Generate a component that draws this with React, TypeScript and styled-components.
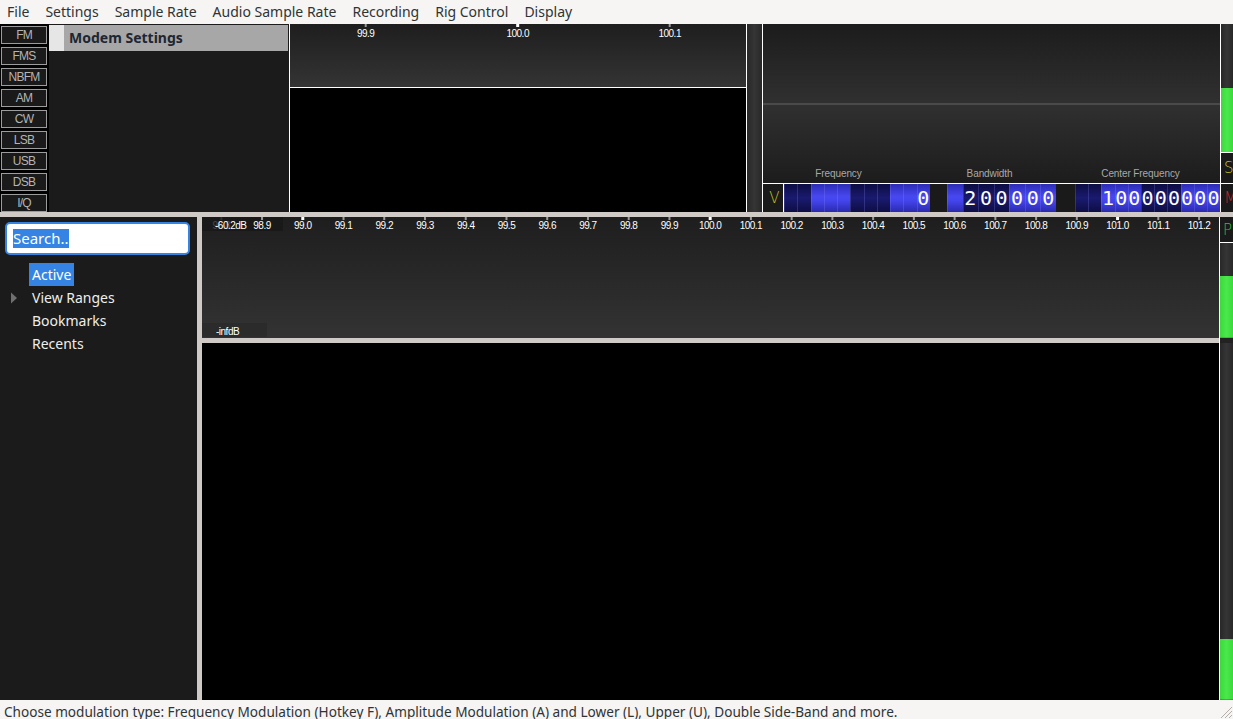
import React from "react";
import styled, { createGlobalStyle } from "styled-components";

const UI_FONT = `"Noto Sans", "Open Sans", sans-serif`;
const SCOPE_FONT = `"Liberation Sans", Arial, sans-serif`;
const MONO_FONT = `"DejaVu Sans Mono", "Liberation Mono", monospace`;

const SPLIT = "#cfcac5";
const PANEL = "#1b1b1b";

const GlobalStyle = createGlobalStyle`
  html, body {
    margin: 0;
    padding: 0;
    overflow: hidden;
    background: #f6f5f4;
  }
  * {
    box-sizing: border-box;
  }
`;

const MENU = ["File", "Settings", "Sample Rate", "Audio Sample Rate", "Recording", "Rig Control", "Display"];
const MODES = ["FM", "FMS", "NBFM", "AM", "CW", "LSB", "USB", "DSB", "I/Q"];
const TREE = [
  { label: "Active", selected: true, expander: false },
  { label: "View Ranges", selected: false, expander: true },
  { label: "Bookmarks", selected: false, expander: false },
  { label: "Recents", selected: false, expander: false },
];

// digit cells are shaded in groups of three counted from the right
const buildCells = (count: number, value: string) => {
  const padded = value.padStart(count, " ");
  return padded.split("").map((ch, i) => ({
    ch: ch === " " ? "" : ch,
    bright: Math.floor((count - 1 - i) / 3) % 2 === 0,
  }));
};

type Tick = { x: number; text: string; major: boolean };

const ScaleTick = ({ tick, baseline }: { tick: Tick; baseline: number }) => (
  <g>
    <rect
      x={tick.x - (tick.major ? 1.5 : 1)}
      y={0}
      width={tick.major ? 3 : 2}
      height={3}
      fill={tick.major ? "#ffffff" : "#9a9a9a"}
    />
    <ScaleText x={tick.x} y={baseline} textAnchor="middle">
      {tick.text}
    </ScaleText>
  </g>
);

const App = () => {
  const bottomLabels: Tick[] = Array.from({ length: 25 }, (_, i) => ({
    x: 19.3 + 40.74 * i,
    text: (98.8 + 0.1 * i).toFixed(1),
    major: i === 2 || i === 12 || i === 22,
  }));
  const topLabels: Tick[] = [
    { x: 75.7, text: "99.9", major: false },
    { x: 227.7, text: "100.0", major: true },
    { x: 379.7, text: "100.1", major: false },
  ];

  return (
    <Shell>
      <GlobalStyle />
      <MenuBar>
        {MENU.map((m) => (
          <MenuItem key={m}>{m}</MenuItem>
        ))}
      </MenuBar>

      <Workspace>
        <TopPane>
          <ModeList>
            {MODES.map((m) => (
              <ModeButton key={m}>{m}</ModeButton>
            ))}
          </ModeList>

          <ModemPanel>
            <ModemHeader>
              <HeaderStrip />
              <HeaderTitle>Modem Settings</HeaderTitle>
            </ModemHeader>
          </ModemPanel>

          <ScopeBox $width={458}>
            <MiniSpectrum>
              <svg width="456" height="63">
                {topLabels.map((l) => (
                  <ScaleTick key={l.text} tick={l} baseline={13} />
                ))}
              </svg>
            </MiniSpectrum>
            <Waterfall />
          </ScopeBox>

          <Meter $width={15} $fill={0} />

          <ScopeBox $width={459}>
            <MainSpectrum>
              <ReadoutLabels>
                <span>Frequency</span>
                <span>Bandwidth</span>
                <span>Center Frequency</span>
              </ReadoutLabels>
            </MainSpectrum>
            <DigitBar>
              <LetterBox $color="#c4c21e" $width={20} $divider>
                V
              </LetterBox>
              <DigitGroup $width={146}>
                {buildCells(11, "0").map((c, i) => (
                  <DigitCell key={i} $bright={c.bright}>
                    {c.ch}
                  </DigitCell>
                ))}
              </DigitGroup>
              <DigitGap $width={17} />
              <DigitGroup $width={109}>
                {buildCells(7, "200000").map((c, i) => (
                  <DigitCell key={i} $bright={c.bright}>
                    {c.ch}
                  </DigitCell>
                ))}
              </DigitGroup>
              <DigitGap $width={19} />
              <DigitGroup $width={145}>
                {buildCells(11, "100000000").map((c, i) => (
                  <DigitCell key={i} $bright={c.bright}>
                    {c.ch}
                  </DigitCell>
                ))}
              </DigitGroup>
            </DigitBar>
          </ScopeBox>

          <SideMeters $width={12}>
            <Meter $fill={50} $grow />
            <LetterBox $color="#c4c21e" $height={31} $topRule>
              S
            </LetterBox>
            <LetterBox $color="#c8262a" $height={29} $topRule>
              M
            </LetterBox>
          </SideMeters>
        </TopPane>

        <BottomPane>
          <Sidebar>
            <SearchField>
              <SearchText>Search..</SearchText>
            </SearchField>
            <Tree>
              {TREE.map((t) => (
                <TreeRow key={t.label}>
                  <Expander>
                    {t.expander && (
                      <svg width="8" height="12" viewBox="0 0 8 12">
                        <path d="M1 0.5 L7 6 L1 11.5 Z" fill="#6f6f6f" />
                      </svg>
                    )}
                  </Expander>
                  <TreeLabel $selected={t.selected}>{t.label}</TreeLabel>
                </TreeRow>
              ))}
            </Tree>
          </Sidebar>

          <ScopeColumn>
            <WideSpectrum>
              <svg width="1017" height="121">
                <ScaleTick tick={bottomLabels[0]} baseline={12} />
                {/* dB readouts sit on a dim plate over the scale */}
                <rect x="0" y="0" width="81" height="14" fill="rgba(24,24,24,0.8)" />
                <rect x="0" y="106" width="65" height="14" fill="rgba(0,0,0,0.12)" />
                {bottomLabels.slice(1).map((l) => (
                  <ScaleTick key={l.text} tick={l} baseline={12} />
                ))}
                <ScaleText x={13} y={12}>
                  -60.2dB
                </ScaleText>
                <ScaleText x={14} y={118}>
                  -infdB
                </ScaleText>
              </svg>
            </WideSpectrum>
            <Waterfall />
          </ScopeColumn>

          <SideMeters $width={14} $rule>
            <LetterBox $color="#2fbf3a" $height={26} $bottomRule>
              P
            </LetterBox>
            <Meter $fill={65} $height={95} />
            <MeterGap />
            <Meter $fill={17} $grow />
          </SideMeters>
        </BottomPane>
      </Workspace>

      <StatusBar>
        <StatusText>
          Choose modulation type: Frequency Modulation (Hotkey F), Amplitude Modulation (A) and Lower (L), Upper (U),
          Double Side-Band and more.
        </StatusText>
        <Grip width="16" height="16" viewBox="0 0 16 16">
          <path d="M15 4 L4 15 M15 8 L8 15 M15 12 L12 15" stroke="#b3aea9" strokeWidth="1" />
        </Grip>
      </StatusBar>
    </Shell>
  );
};

const Shell = styled.div`
  width: 100vw;
  height: 100vh;
  display: flex;
  flex-direction: column;
  background: #f6f5f4;
`;

const MenuBar = styled.div`
  height: 24px;
  flex: none;
  display: flex;
  align-items: center;
  font-family: ${UI_FONT};
  font-size: 14px;
  color: #2e3436;
`;

const MenuItem = styled.div`
  padding: 0 8px;
  line-height: 24px;
  white-space: nowrap;
  &:first-child {
    padding-left: 7px;
  }
`;

const Workspace = styled.div`
  flex: 1;
  display: flex;
  flex-direction: column;
  gap: 5px;
  background: ${SPLIT};
  min-height: 0;
`;

const TopPane = styled.div`
  height: 188px;
  flex: none;
  display: flex;
  background: #000;
`;

const ModeList = styled.div`
  width: 49px;
  flex: none;
  display: flex;
  flex-direction: column;
  gap: 3px;
  padding: 2px 2px 0 1px;
  background: #000;
`;

const ModeButton = styled.div`
  height: 18px;
  border: 1px solid #9c9c9c;
  background: #1a1a1a;
  color: #b4b4b4;
  font-family: ${SCOPE_FONT};
  font-size: 12px;
  letter-spacing: -0.8px;
  line-height: 16px;
  text-align: center;
`;

const ModemPanel = styled.div`
  width: 240px;
  flex: none;
  background: ${PANEL};
  padding: 1px 1px 0 0;
`;

const ModemHeader = styled.div`
  height: 26px;
  display: flex;
  background: #a7a7a7;
`;

const HeaderStrip = styled.div`
  width: 15px;
  background: #e6e6e6;
`;

const HeaderTitle = styled.div`
  padding-left: 5px;
  font-family: ${UI_FONT};
  font-weight: 700;
  font-size: 14px;
  line-height: 26px;
  color: #1d2632;
`;

const ScopeBox = styled.div<{ $width: number }>`
  width: ${(p) => p.$width}px;
  flex: none;
  display: flex;
  flex-direction: column;
  border-left: 1px solid #ffffff;
  border-right: 1px solid #ffffff;
  background: #000;
`;

const MiniSpectrum = styled.div`
  height: 64px;
  flex: none;
  border-bottom: 1px solid #ffffff;
  background: linear-gradient(#1e1e1e, #343434);
  svg {
    display: block;
  }
`;

const ScaleText = styled.text`
  font-family: ${SCOPE_FONT};
  font-size: 10px;
  letter-spacing: -0.5px;
  fill: #ffffff;
`;

const Waterfall = styled.div`
  flex: 1;
  background: #000;
`;

const MainSpectrum = styled.div`
  height: 160px;
  flex: none;
  display: flex;
  flex-direction: column;
  justify-content: flex-end;
  border-bottom: 1px solid #ffffff;
  background: linear-gradient(
    #1c1c1c 0px,
    #303030 79px,
    #4a4a4a 79px,
    #4a4a4a 81px,
    #303030 81px,
    #1c1c1c 159px
  );
`;

const ReadoutLabels = styled.div`
  display: grid;
  grid-template-columns: 1fr 1fr 1fr;
  padding: 0 4px 3px 0;
  font-family: ${SCOPE_FONT};
  font-size: 10px;
  line-height: 12px;
  letter-spacing: -0.1px;
  color: #a9a9a9;
  text-align: center;
`;

const DigitBar = styled.div`
  flex: 1;
  display: flex;
  background: #1a1a1a;
`;

const LetterBox = styled.div<{
  $color: string;
  $width?: number;
  $height?: number;
  $divider?: boolean;
  $topRule?: boolean;
  $bottomRule?: boolean;
}>`
  flex: none;
  width: ${(p) => (p.$width ? `${p.$width + (p.$divider ? 1 : 0)}px` : "auto")};
  height: ${(p) => (p.$height ? `${p.$height}px` : "auto")};
  display: flex;
  align-items: center;
  padding-left: 3px;
  justify-content: ${(p) => (p.$width ? "center" : "flex-start")};
  background: #1a1a1a;
  color: ${(p) => p.$color};
  font-family: "DejaVu Sans", sans-serif;
  font-size: 15px;
  font-weight: 300;
  border-right: ${(p) => (p.$divider ? "1px solid #ffffff" : "none")};
  border-top: ${(p) => (p.$topRule ? "1px solid #ffffff" : "none")};
  border-bottom: ${(p) => (p.$bottomRule ? "1px solid #ffffff" : "none")};
  overflow: hidden;
`;

const DigitGroup = styled.div<{ $width: number }>`
  width: ${(p) => p.$width}px;
  flex: none;
  display: flex;
`;

const DigitGap = styled.div<{ $width: number }>`
  width: ${(p) => p.$width}px;
  flex: none;
`;

const DigitCell = styled.div<{ $bright: boolean }>`
  flex: 1;
  min-width: 0;
  display: flex;
  align-items: center;
  justify-content: center;
  box-shadow: inset 1px 0 rgba(150, 150, 255, 0.22);
  background: ${(p) =>
    p.$bright
      ? "linear-gradient(#2c2cb4, #4848f2 45%, #4444ec 60%, #2a2aae)"
      : "linear-gradient(#0d0d44, #1a1a70 50%, #0d0d44)"};
  color: #ffffff;
  font-family: ${MONO_FONT};
  font-size: 20px;
  line-height: 28px;
`;

const SideMeters = styled.div<{ $width: number; $rule?: boolean }>`
  width: ${(p) => p.$width}px;
  flex: none;
  display: flex;
  flex-direction: column;
  background: #2a2a2a;
  border-left: ${(p) => (p.$rule ? "1px solid #ffffff" : "none")};
  overflow: hidden;
`;

const Meter = styled.div<{ $width?: number; $height?: number; $fill: number; $grow?: boolean }>`
  flex: ${(p) => (p.$grow ? "1" : "none")};
  width: ${(p) => (p.$width ? `${p.$width}px` : "auto")};
  height: ${(p) => (p.$height ? `${p.$height}px` : "auto")};
  background: ${(p) =>
    `linear-gradient(to right, #3bd93b, #4ae84a 50%, #3bd93b) bottom / 100% ${p.$fill}% no-repeat,
     linear-gradient(to right, #282828, #353535 50%, #282828)`};
`;

const MeterGap = styled.div`
  height: 5px;
  flex: none;
  background: #222;
`;

const BottomPane = styled.div`
  flex: 1;
  display: flex;
  min-height: 0;
  background: ${SPLIT};
`;

const Sidebar = styled.div`
  width: 197px;
  flex: none;
  margin-right: 5px;
  background: ${PANEL};
  padding: 5px 7px 0 5px;
  font-family: ${UI_FONT};
`;

const SearchField = styled.div`
  height: 33px;
  display: flex;
  align-items: center;
  padding-left: 6px;
  background: #ffffff;
  border: 2px solid #3584e4;
  border-radius: 5px;
`;

const SearchText = styled.span`
  background: #3584e4;
  color: #ffffff;
  font-size: 15px;
  line-height: 19px;
`;

const Tree = styled.div`
  margin-top: 8px;
  display: flex;
  flex-direction: column;
`;

const TreeRow = styled.div`
  height: 23px;
  display: flex;
  align-items: center;
`;

const Expander = styled.div`
  width: 24px;
  flex: none;
  display: flex;
  align-items: center;
  padding-left: 5px;
  svg {
    display: block;
  }
`;

const TreeLabel = styled.span<{ $selected: boolean }>`
  padding: 0 3px;
  line-height: 23px;
  font-size: 14px;
  color: ${(p) => (p.$selected ? "#ffffff" : "#eeeeec")};
  background: ${(p) => (p.$selected ? "#3584e4" : "transparent")};
`;

const ScopeColumn = styled.div`
  width: 1017px;
  flex: none;
  display: flex;
  flex-direction: column;
  gap: 5px;
  background: ${SPLIT};
`;

const WideSpectrum = styled.div`
  height: 121px;
  flex: none;
  background: linear-gradient(#1e1e1e, #333333);
  svg {
    display: block;
  }
`;

const StatusBar = styled.div`
  height: 19px;
  flex: none;
  display: flex;
  align-items: flex-start;
  justify-content: space-between;
  padding-left: 4px;
  background: #f6f5f4;
  overflow: hidden;
`;

const StatusText = styled.span`
  font-family: ${UI_FONT};
  font-size: 13.6px;
  line-height: 23px;
  color: #2e3436;
  white-space: nowrap;
`;

const Grip = styled.svg`
  display: block;
  flex: none;
  align-self: flex-end;
`;

export default App;
